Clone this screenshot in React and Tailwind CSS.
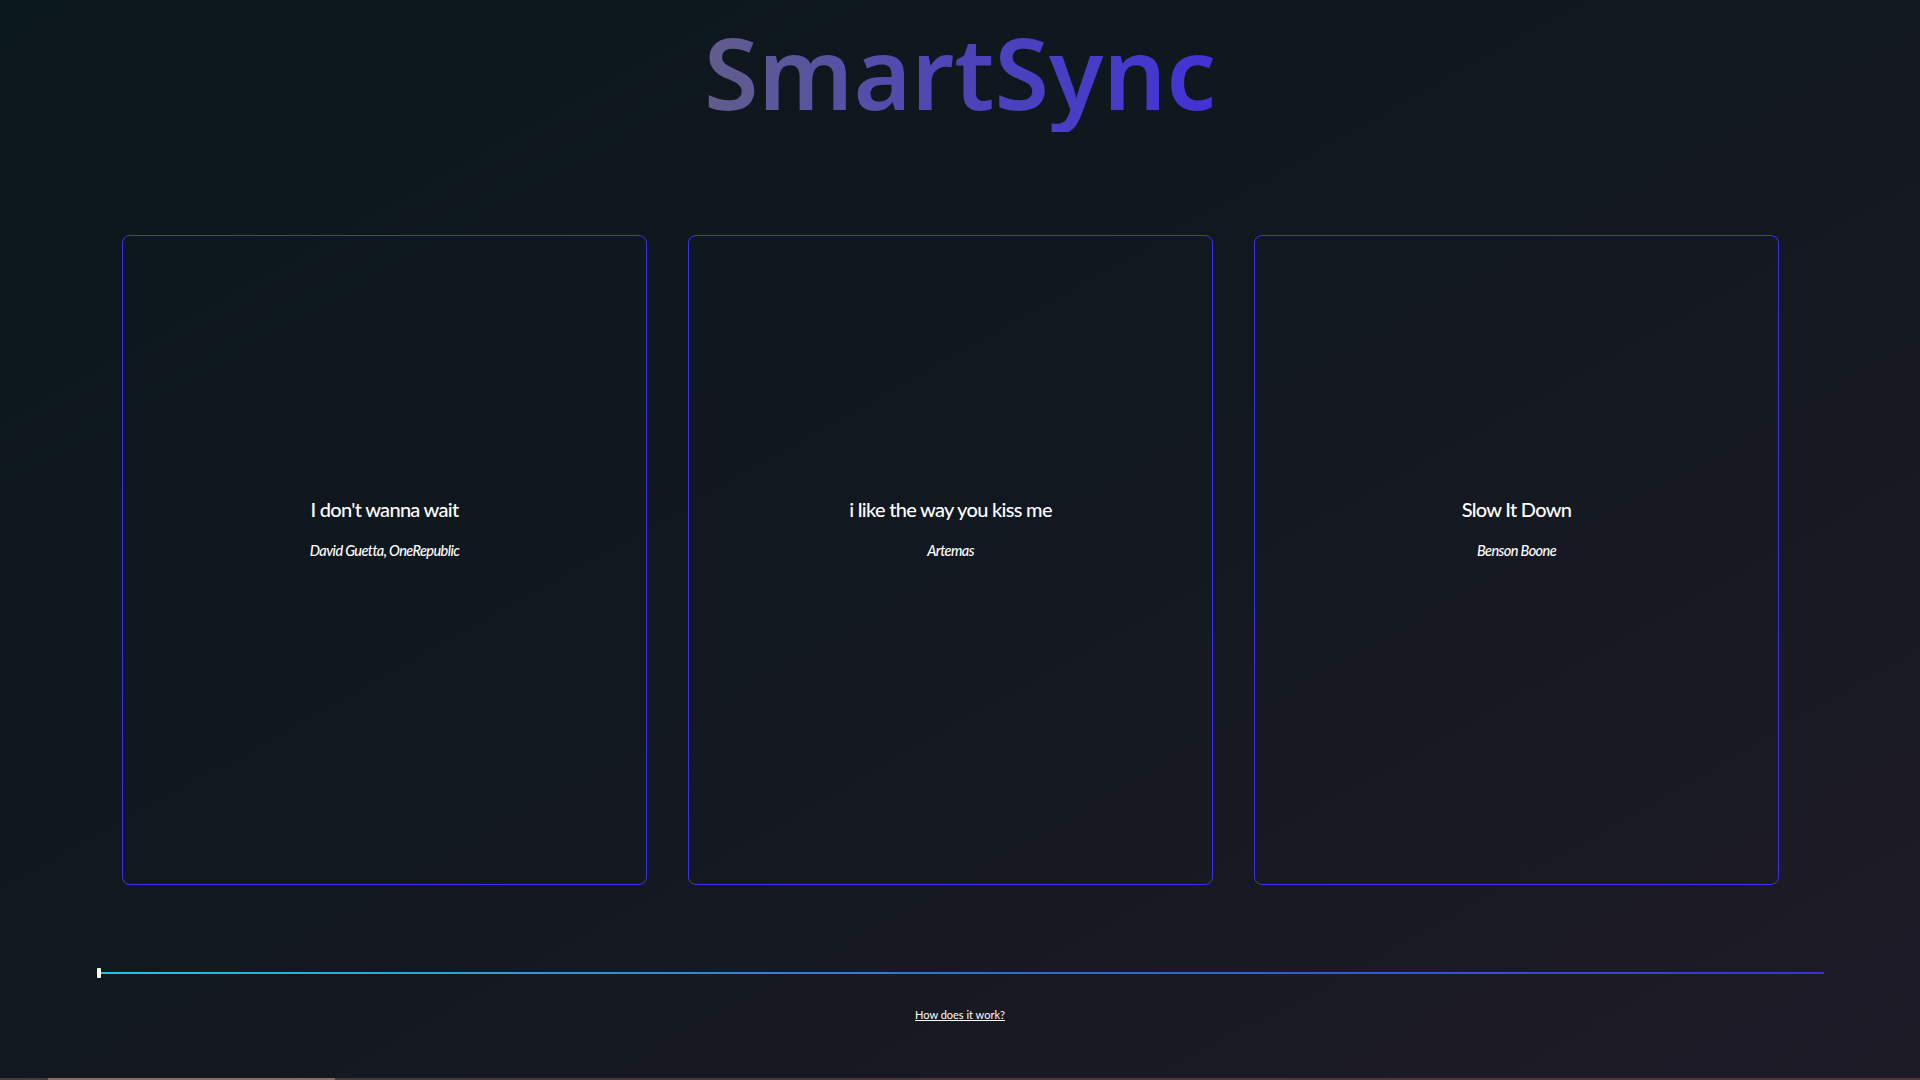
import React from 'react';

const songs = [
  { title: "I don't wanna wait", artist: 'David Guetta, OneRepublic' },
  { title: 'i like the way you kiss me', artist: 'Artemas' },
  { title: 'Slow It Down', artist: 'Benson Boone' },
];

const SongCard = ({ song }) => (
  <div className="h-[650px] rounded-[8px] border border-[#3d31f5] flex flex-col items-center justify-center pb-[64px]">
    <h3 className="text-[20px] font-medium text-white tracking-[-0.7px] leading-[24px]">{song.title}</h3>
    <p className="mt-[21px] text-[14.5px] font-medium italic text-white tracking-[-0.6px] leading-[18px]">{song.artist}</p>
  </div>
);

export default function App() {
  return (
    <div
      className="relative w-full h-[1080px] overflow-hidden bg-gradient-to-br from-[#0a171d] via-[#12181f] to-[#1e1b27] flex flex-col items-center"
      style={{ fontFamily: 'Lato, "Noto Sans", sans-serif' }}
    >
      {/* logo */}
      <h1
        className="mt-[12px] text-[99px] font-semibold leading-[120px] tracking-[0px] bg-gradient-to-r from-[#625d8c] via-[#4d44b8] to-[#4232d4] bg-clip-text text-transparent"
        style={{ fontFamily: '"Noto Sans", sans-serif' }}
      >
        SmartSync
      </h1>

      {/* cards */}
      <div className="mt-[103px] self-start ml-[122px] w-[1657px] grid grid-cols-3 gap-[41px]">
        {songs.map((s) => (
          <SongCard key={s.title} song={s} />
        ))}
      </div>

      {/* progress */}
      <div className="mt-[87px] relative w-[1727px] h-[2px] bg-gradient-to-r from-[#19c6e6] via-[#2f6fdc] to-[#3a2fd6]">
        <div className="absolute left-0 top-[-4px] w-[4px] h-[10px] rounded-[1px] bg-white" />
      </div>

      <a href="#" className="mt-[33px] text-[11px] text-white underline">
        How does it work?
      </a>

      <div className="absolute bottom-0 left-0 w-full h-[2px] bg-[#4e3b2d] flex">
        <div className="ml-[48px] w-[287px] h-full bg-[#8c6f5a]" />
      </div>
    </div>
  );
}
